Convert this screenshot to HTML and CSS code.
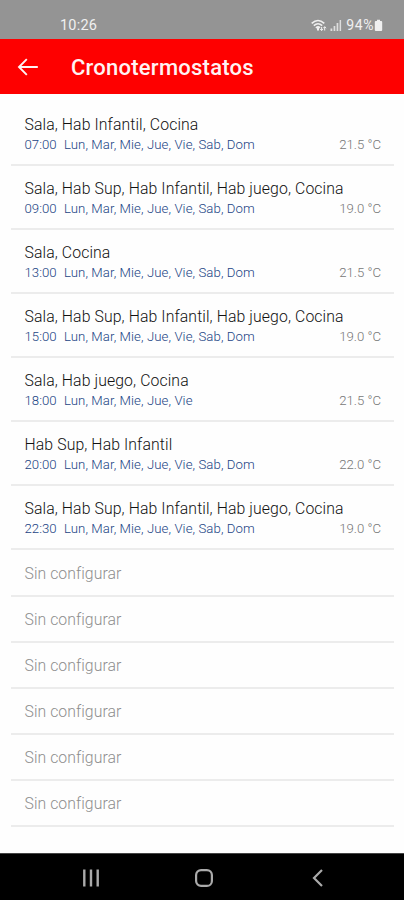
FILE: index.html
```
<!DOCTYPE html>
<html lang="es">
<head>
<meta charset="utf-8">
<meta name="viewport" content="width=device-width, initial-scale=1">
<title>Cronotermostatos</title>
<link rel="stylesheet" href="styles.css">
</head>
<body>
<div class="status">
  <span class="clock">10:26</span>
  <div class="indicators">
    <svg class="wifi" width="16" height="13" viewBox="0 0 16 13" fill="none" stroke="currentColor">
      <path d="M.7 4.4Q7 -1.4 13.3 4.4M2.8 6.7Q7 2.8 11.2 6.7M4.9 9Q7 7 9 8.8" stroke-width="1.6"/>
      <path d="M7 8.2v3.2" stroke-width="2"/>
      <path d="M10.6 8v3.4M9.2 10l1.4 1.6L12 10M13.7 11.5V7.8M12.3 9.2l1.4-1.5 1.4 1.5" stroke-width="1"/>
    </svg>
    <svg class="signal" width="12" height="13" viewBox="0 0 12 13" fill="currentColor">
      <path d="M.5 9.5h1.8V12H.5zM3.6 7h1.7v5H3.6zM6.6 4h1.7v8H6.6zM9.6 1h1.5v11H9.6z"/>
    </svg>
    <span class="percent">94%</span>
    <svg class="battery" width="9" height="13" viewBox="0 0 9 13" fill="currentColor"><path d="M3 .8h3v1.3h1.2q1 0 1 1v8q0 1-1 1H1.8q-1 0-1-1v-8q0-1 1-1H3z"/></svg>
  </div>
</div>
<header class="bar">
  <svg class="back" width="22" height="18" viewBox="0 0 22 18" fill="none" stroke="currentColor" stroke-width="1.9"><path d="M20.8 9H2.5M9.8 1.2L2 9l7.8 7.8"/></svg>
  <h1>Cronotermostatos</h1>
</header>
<main class="list">
  <div class="row"><div class="zones">Sala, Hab Infantil, Cocina</div><div class="detail"><span class="time">07:00</span><span class="days">Lun, Mar, Mie, Jue, Vie, Sab, Dom</span><span class="temp">21.5 °C</span></div></div>
  <div class="row"><div class="zones">Sala, Hab Sup, Hab Infantil, Hab juego, Cocina</div><div class="detail"><span class="time">09:00</span><span class="days">Lun, Mar, Mie, Jue, Vie, Sab, Dom</span><span class="temp">19.0 °C</span></div></div>
  <div class="row"><div class="zones">Sala, Cocina</div><div class="detail"><span class="time">13:00</span><span class="days">Lun, Mar, Mie, Jue, Vie, Sab, Dom</span><span class="temp">21.5 °C</span></div></div>
  <div class="row"><div class="zones">Sala, Hab Sup, Hab Infantil, Hab juego, Cocina</div><div class="detail"><span class="time">15:00</span><span class="days">Lun, Mar, Mie, Jue, Vie, Sab, Dom</span><span class="temp">19.0 °C</span></div></div>
  <div class="row"><div class="zones">Sala, Hab juego, Cocina</div><div class="detail"><span class="time">18:00</span><span class="days">Lun, Mar, Mie, Jue, Vie</span><span class="temp">21.5 °C</span></div></div>
  <div class="row"><div class="zones">Hab Sup, Hab Infantil</div><div class="detail"><span class="time">20:00</span><span class="days">Lun, Mar, Mie, Jue, Vie, Sab, Dom</span><span class="temp">22.0 °C</span></div></div>
  <div class="row"><div class="zones">Sala, Hab Sup, Hab Infantil, Hab juego, Cocina</div><div class="detail"><span class="time">22:30</span><span class="days">Lun, Mar, Mie, Jue, Vie, Sab, Dom</span><span class="temp">19.0 °C</span></div></div>
  <div class="row empty">Sin configurar</div>
  <div class="row empty">Sin configurar</div>
  <div class="row empty">Sin configurar</div>
  <div class="row empty">Sin configurar</div>
  <div class="row empty">Sin configurar</div>
  <div class="row empty">Sin configurar</div>
</main>
<nav class="nav">
  <svg width="18" height="18" viewBox="0 0 18 18" stroke="currentColor" stroke-width="2.4"><path d="M2.3 .5v17M9 .5v17M15.7 .5v17"/></svg>
  <svg width="18" height="18" viewBox="0 0 18 18" fill="none" stroke="currentColor" stroke-width="2.2"><rect x="1.1" y="1.1" width="15.8" height="15.8" rx="5"/></svg>
  <svg width="18" height="18" viewBox="0 0 18 18" fill="none" stroke="currentColor" stroke-width="2.2"><path d="M14 1L6 9l8 8"/></svg>
</nav>
</body>
</html>
```
FILE: styles.css
```
* { box-sizing: border-box; }
body {
  margin: 0;
  height: 900px;
  display: flex;
  flex-direction: column;
  overflow: hidden;
  background: #fefefe;
  font-family: Roboto, "Liberation Sans", sans-serif;
}
svg { display: block; flex: none; }
.status {
  height: 39px;
  padding: 11px 21px 0 60px;
  display: flex;
  justify-content: space-between;
  align-items: center;
  background: #949494;
  color: #f0f0f0;
  font-size: 14px;
}
.clock { font-size: 14.5px; letter-spacing: 0.2px; }
.indicators { display: flex; align-items: center; }
.wifi { margin-left: -2px; }
.signal { margin: 0 4px 0 3px; color: #dedede; }
.percent { font-size: 14px; letter-spacing: 0.6px; }
.battery { margin-left: 0; }
.bar {
  height: 55px;
  padding-left: 17px;
  display: flex;
  align-items: center;
  gap: 32px;
  background: #fe0000;
  color: #fff3f3;
}
h1 {
  margin: 2px 0 0;
  font-size: 22px;
  line-height: 28px;
  font-weight: 500;
  letter-spacing: 0.24px;
}
.list {
  flex: 1;
  padding: 7.4px 10px 0 11px;
}
.row {
  height: 64.15px;
  padding: 13.2px 13px 0 13.5px;
  border-bottom: 2px solid #ececec;
  color: #111;
}
.zones {
  font-size: 15.8px;
  line-height: 20px;
  font-weight: 300;
  letter-spacing: 0.1px;
  white-space: nowrap;
}
.detail {
  display: flex;
  align-items: center;
  font-size: 13.2px;
  line-height: 19px;
  font-weight: 300;
  color: #1b4484;
}
.time { width: 39.5px; }
.days { letter-spacing: 0.08px; }
.temp {
  margin-left: auto;
  color: #777;
}
.row.empty {
  height: 46.15px;
  padding-top: 13.2px;
  font-size: 15.8px;
  line-height: 20px;
  font-weight: 300;
  letter-spacing: 0.05px;
  color: #8e8e8e;
}
.nav {
  height: 47px;
  padding: 2px 78px 0 82px;
  display: flex;
  align-items: center;
  justify-content: space-between;
  background: #000;
  border-top: 1px solid #444;
  color: #aaa;
}
```
